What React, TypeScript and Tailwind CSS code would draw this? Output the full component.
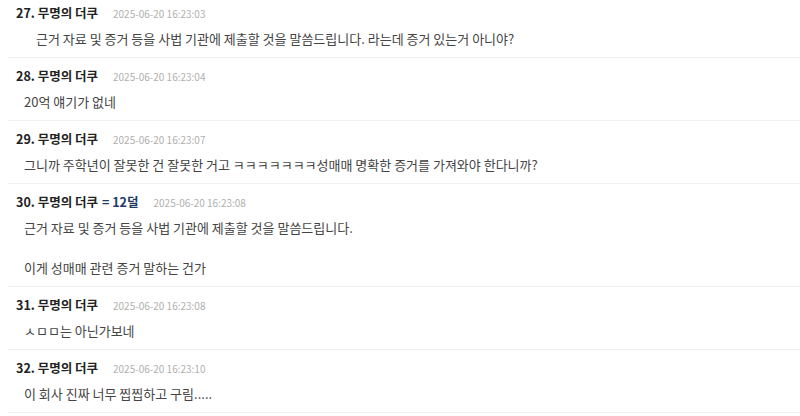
const comments = [
  {
    no: 27,
    nick: "무명의 더쿠",
    date: "2025-06-20 16:23:03",
    lines: ["근거 자료 및 증거 등을 사법 기관에 제출할 것을 말씀드립니다. 라는데 증거 있는거 아니야?"],
    indent: true,
  },
  { no: 28, nick: "무명의 더쿠", date: "2025-06-20 16:23:04", lines: ["20억 얘기가 없네"] },
  {
    no: 29,
    nick: "무명의 더쿠",
    date: "2025-06-20 16:23:07",
    lines: ["그니까 주학년이 잘못한 건 잘못한 거고 ㅋㅋㅋㅋㅋㅋㅋ성매매 명확한 증거를 가져와야 한다니까?"],
  },
  {
    no: 30,
    nick: "무명의 더쿠",
    tag: "= 12덜",
    date: "2025-06-20 16:23:08",
    lines: ["근거 자료 및 증거 등을 사법 기관에 제출할 것을 말씀드립니다.", "", "이게 성매매 관련 증거 말하는 건가"],
  },
  { no: 31, nick: "무명의 더쿠", date: "2025-06-20 16:23:08", lines: ["ㅅㅁㅁ는 아닌가보네"] },
  { no: 32, nick: "무명의 더쿠", date: "2025-06-20 16:23:10", lines: ["이 회사 진짜 너무 찝찝하고 구림....."] },
];

export default function App() {
  return (
    <div
      className="w-[800px] h-[416px] overflow-hidden bg-white"
      style={{ fontFamily: '"Noto Sans CJK KR", "Noto Sans", sans-serif' }}
    >
      <ul className="ml-2">
        {comments.map((c, i) => (
          <li
            key={c.no}
            className={`border-b border-[#efefef] pb-2 ${i === 0 ? "pt-[3px]" : "pt-2"}`}
          >
            <div className="flex items-center h-5 pl-2">
              <span className="text-[12.5px] font-bold text-[#222]">
                {c.no}. {c.nick}
              </span>
              {c.tag && <span className="ml-1 text-[12.5px] font-bold text-[#1f3a66]">{c.tag}</span>}
              <span className="ml-[15px] text-[10px] text-[#b0b0b0]">{c.date}</span>
            </div>
            <div className={`mt-[6px] text-[13px] leading-5 text-[#444] ${c.indent ? "pl-7" : "pl-4"}`}>
              {c.lines.map((l, j) => (
                <div key={j} className="h-5">
                  {l}
                </div>
              ))}
            </div>
          </li>
        ))}
      </ul>
    </div>
  );
}
